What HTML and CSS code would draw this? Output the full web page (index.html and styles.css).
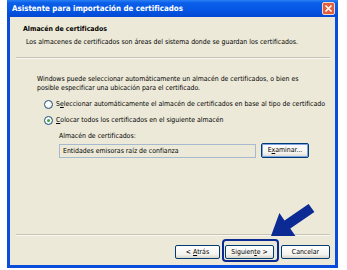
FILE: index.html
```html
<!DOCTYPE html>
<html lang="es">
  <head>
    <meta charset="utf-8" />
    <title>Asistente para importación de certificados</title>
    <link rel="stylesheet" href="styles.css">
  </head>
  <body>
    <div class="window">
      <div class="titlebar">
        <span class="title">Asistente para importación de certificados</span>
        <span class="close">
          <svg width="9" height="9" viewBox="0 0 9 9"><path d="M1.5 1.5 L7.5 7.5 M7.5 1.5 L1.5 7.5" stroke="#fff" stroke-width="1.6" /></svg>
        </span>
      </div>
      <div class="body">
        <div class="header">
          <p class="head-title">Almacén de certificados</p>
          <p class="head-sub">Los almacenes de certificados son áreas del sistema donde se guardan los certificados.</p>
        </div>
        <hr class="sep">
        <div class="content">
          <p class="intro">Windows puede seleccionar automáticamente un almacén de certificados, o bien es<br>posible especificar una ubicación para el certificado.</p>
          <div class="radio"><span class="dot"></span><span>S<u>e</u>leccionar automáticamente el almacén de certificados en base al tipo de certificado</span></div>
          <div class="radio checked"><span class="dot"></span><span><u>C</u>olocar todos los certificados en el siguiente almacén</span></div>
          <div class="store">
            <p class="store-label">Almacén de certificados:</p>
            <div class="store-row">
              <div class="field">Entidades emisoras raíz de confianza</div>
              <button class="btn btn-hot">E<u>x</u>aminar...</button>
            </div>
          </div>
        </div>
        <hr class="sep">
        <div class="footer">
          <button class="btn btn-back">&lt; <u>A</u>trás</button>
          <button class="btn btn-next">Siguien<u>t</u>e &gt;</button>
          <button class="btn btn-cancel">Cancelar</button>
        </div>
      </div>
    </div>
    <svg class="marks" width="347" height="270" viewBox="0 0 347 270">
      <rect x="223" y="240" width="55" height="21" rx="3" fill="none" stroke="#0c2a94" stroke-width="2" />
      <polygon points="271,236 295.4,236 290.3,228.6 314.4,212.1 308.6,203.9 284.5,220.4 279.4,213" fill="#0c2a94" />
    </svg>
  </body>
</html>
```

FILE: styles.css
```css
body {
  margin: 0;
  background: #fff;
  font-family: "DejaVu Sans", "Liberation Sans", sans-serif;
  font-stretch: condensed;
  font-size: 6.9px;
  line-height: 9px;
  color: #000;
}
p {
  margin: 0;
}

.window {
  position: relative;
  margin-left: 7px;
  width: 331px;
  height: 268px;
  display: flex;
  flex-direction: column;
  box-sizing: border-box;
  border: 3px solid #0a4ddb;
  border-top: none;
  background: #ece9d8;
}
.titlebar {
  height: 17px;
  margin: 0 -3px;
  display: flex;
  align-items: center;
  justify-content: space-between;
  padding: 0 3px 0 5px;
  background: linear-gradient(#2a80f4 0, #0a5ee8 3px, #0556e4 60%, #0449d2 100%);
}
.title {
  color: #fff;
  font-weight: bold;
  font-size: 7.9px;
}
.close {
  width: 13px;
  height: 13px;
  box-sizing: border-box;
  border: 1px solid #f4d7cc;
  border-radius: 2px;
  background: #e0603e;
  display: flex;
  align-items: center;
  justify-content: center;
}

.body {
  flex: 1;
  display: flex;
  flex-direction: column;
}
.header {
  padding: 8px 0 0 13px;
}
.head-title {
  font-weight: bold;
}
.head-sub {
  margin: 4px 0 0 3px;
}
.sep {
  margin: 10px 5px 0 6px;
  height: 0;
  border: none;
  border-top: 1px solid #c8c5b5;
  border-bottom: 1px solid #f8f7f2;
}

.content {
  flex: 1;
  padding: 16px 0 0 27px;
}
.radio {
  display: flex;
  align-items: center;
  gap: 3px;
  margin: 7px 0 0 7px;
  white-space: nowrap;
}
.dot {
  flex: none;
  width: 9px;
  height: 9px;
  box-sizing: border-box;
  border: 1px solid #1c5180;
  border-radius: 50%;
  background: radial-gradient(circle at 35% 35%, #fff 30%, #dcdcd2 100%);
  display: flex;
  align-items: center;
  justify-content: center;
}
.checked .dot::after {
  content: "";
  width: 3px;
  height: 3px;
  border-radius: 50%;
  background: #3ca33c;
}
.store {
  padding-left: 22px;
  margin-top: 7px;
}
.store-row {
  display: flex;
  align-items: center;
  gap: 5px;
  margin-top: 2px;
}
.field {
  width: 197px;
  height: 14px;
  box-sizing: border-box;
  border: 1px solid #a5b9cf;
  padding-left: 3px;
  line-height: 12px;
}

.btn {
  font: inherit;
  font-stretch: condensed;
  color: #000;
  height: 14px;
  padding: 0;
  box-sizing: border-box;
  border: 1px solid #003c74;
  border-radius: 2px;
  background: linear-gradient(#fff, #f4f3ee 70%, #d8d5c8);
}
.btn-hot {
  width: 48px;
  height: 15px;
  box-shadow: inset 0 0 0 1px #7ea2e4;
}
.footer {
  display: flex;
  justify-content: flex-end;
  padding: 9px 5px 6px 0;
}
.btn-back {
  width: 45px;
  margin-right: 5px;
}
.btn-next {
  width: 49px;
  margin-right: 7px;
}
.btn-cancel {
  width: 49px;
}

.marks {
  position: absolute;
  top: 0;
  left: 0;
  pointer-events: none;
}
```
